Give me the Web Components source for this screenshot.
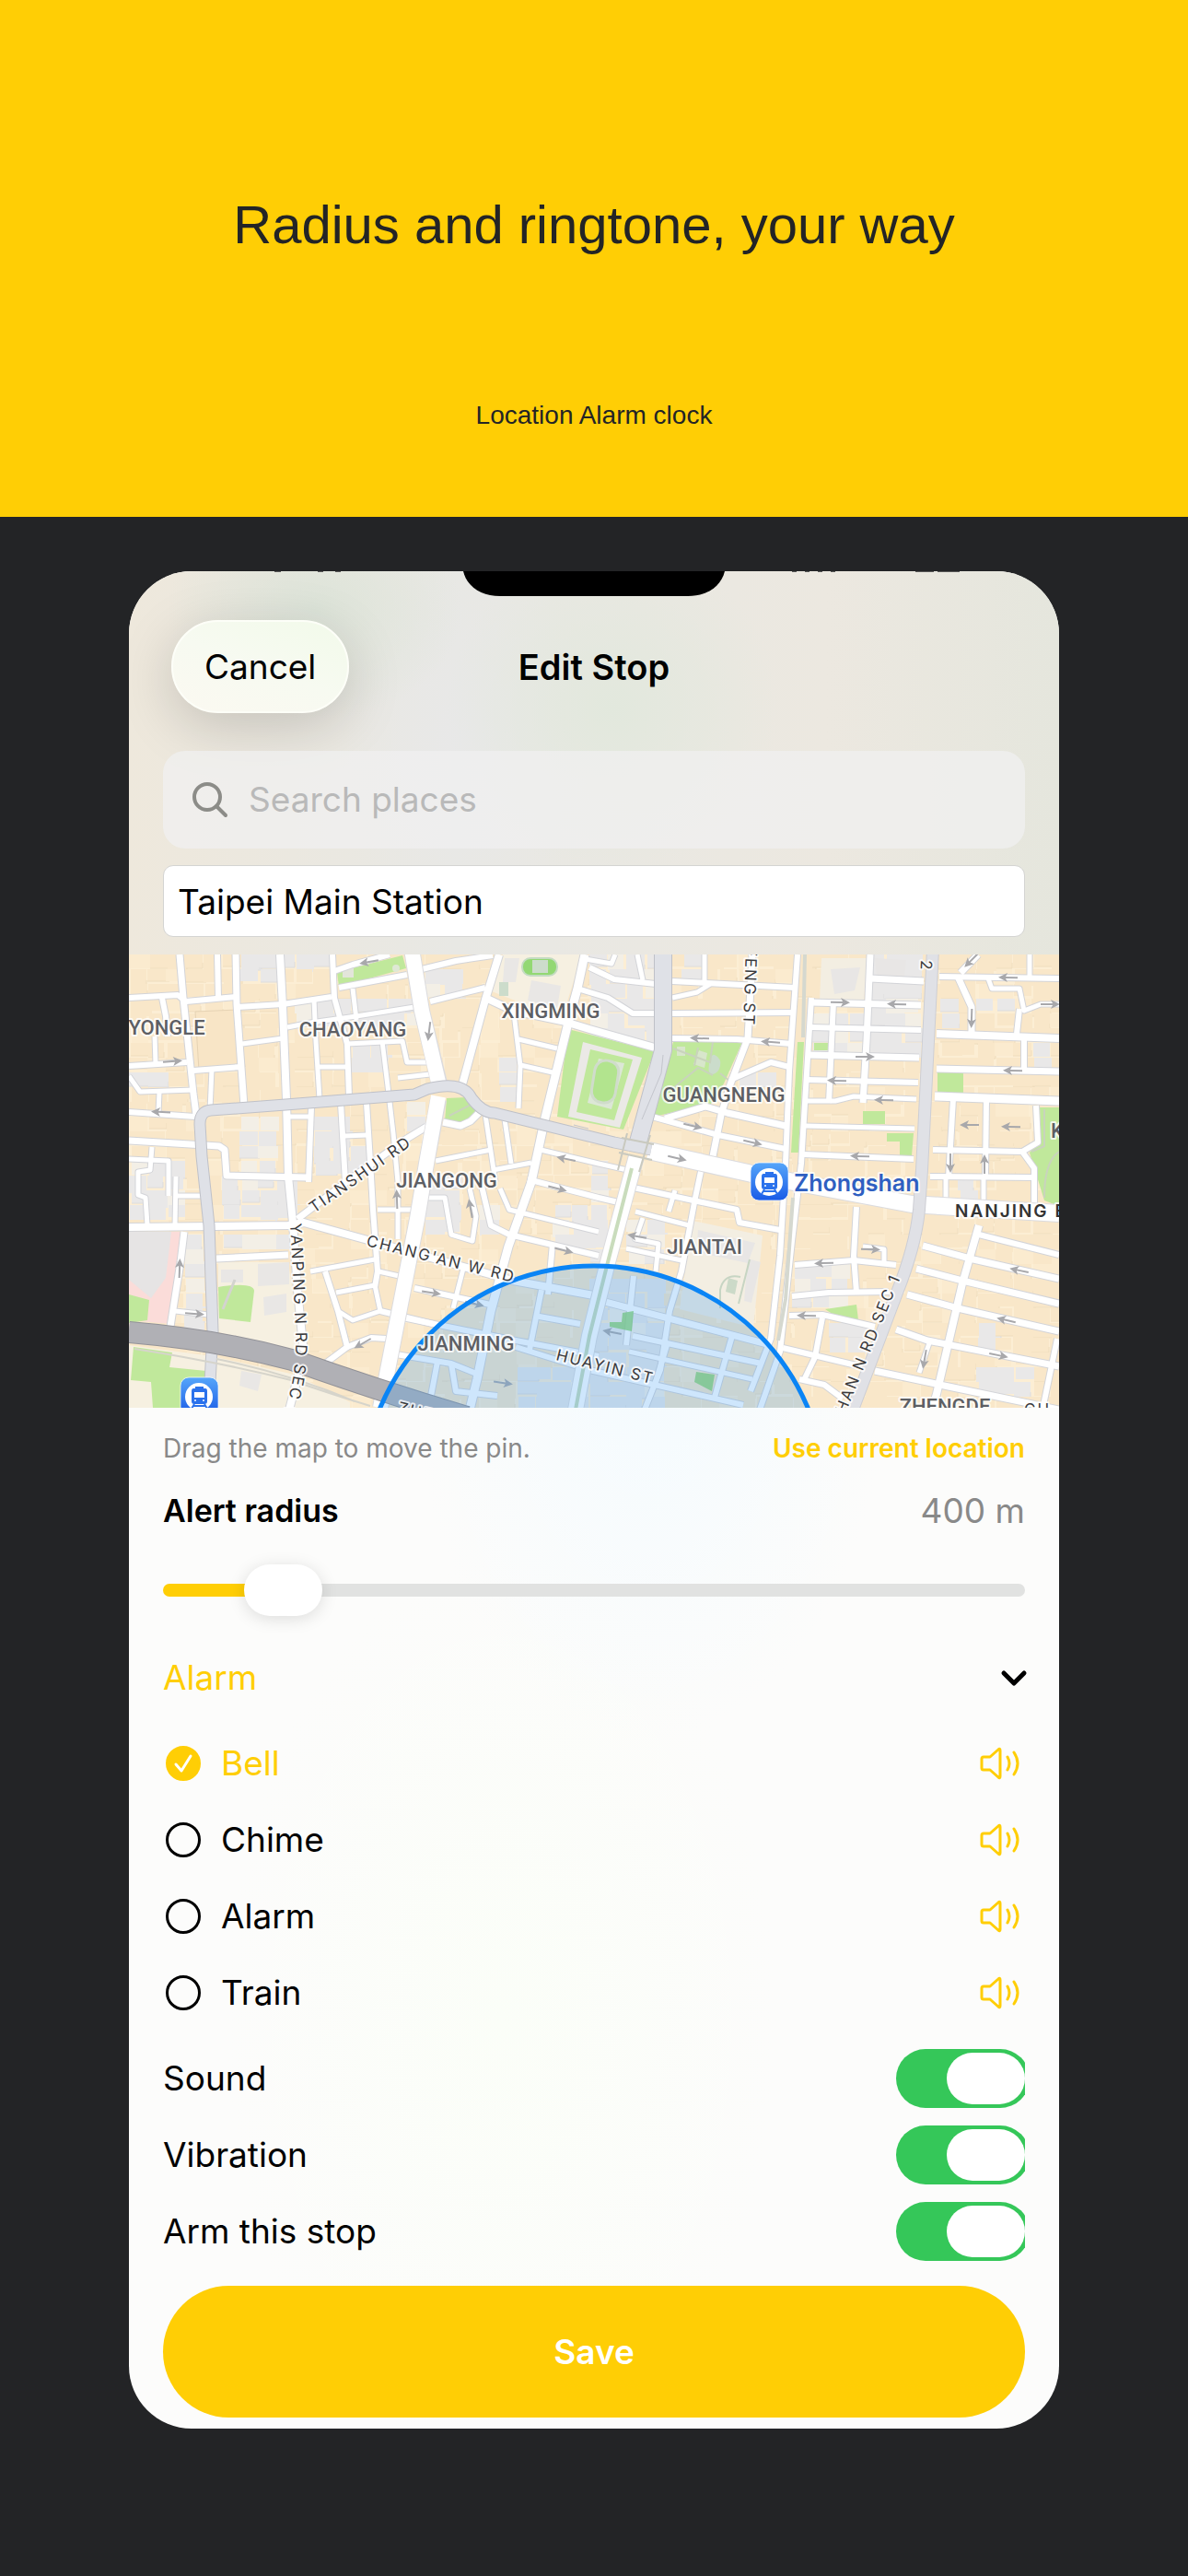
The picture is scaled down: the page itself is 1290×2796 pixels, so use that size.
<!DOCTYPE html>
<html lang="en">
<head>
<meta charset="utf-8">
<meta name="viewport" content="width=device-width, initial-scale=1">
<title>Location Alarm clock</title>
<style>
    :root {
        --yellow: #ffce05;
        --ink: #232426;
        --muted: #898989;
        --green: #35c759;
        --gutter: 37px;
    }
    body {
        margin: 0;
        background: var(--ink);
        font-family: Inter, "Noto Sans", sans-serif;
        font-size: 37px;
        line-height: 48px;
        color: #000;
    }
</style>
</head>
<body>
<promo-hero>
    <span slot="title">Radius and ringtone, your way</span>
    <span slot="subtitle">Location Alarm clock</span>
</promo-hero>
<phone-frame>
    <nav-header slot="header">
        <span slot="action">Cancel</span>
        <span slot="title">Edit Stop</span>
    </nav-header>
    <search-field slot="header" placeholder="Search places"></search-field>
    <name-field slot="header" value="Taipei Main Station"></name-field>
    <stop-map></stop-map>
    <map-hint>
        <span>Drag the map to move the pin.</span>
        <span slot="link">Use current location</span>
    </map-hint>
    <radius-slider value="400" min="100" max="3000"></radius-slider>
    <sound-picker heading="Alarm" sounds="Bell,Chime,Alarm,Train" selected="Bell"></sound-picker>
    <div>
        <toggle-row on>Sound</toggle-row>
        <toggle-row on>Vibration</toggle-row>
        <toggle-row on>Arm this stop</toggle-row>
    </div>
    <save-button>Save</save-button>
</phone-frame>

<script>
class PromoHero extends HTMLElement {
    connectedCallback() {
        this.attachShadow({ mode: 'open' });
        this.shadowRoot.innerHTML = `
            <style>
                :host {
                    display: flex;
                    flex-direction: column;
                    align-items: center;
                    gap: 155px;
                    padding: 208px 40px 94px;
                    background: var(--yellow);
                    color: var(--ink);
                    font-family: "Liberation Sans", Arial, sans-serif;
                    text-align: center;
                }
                h1 {
                    margin: 0;
                    font-size: 58px;
                    font-weight: 400;
                    line-height: 72px;
                }
                p {
                    margin: 0;
                    font-size: 28px;
                    line-height: 32px;
                }
            </style>
            <h1><slot name="title"></slot></h1>
            <p><slot name="subtitle"></slot></p>
        `;
    }
}

class PhoneFrame extends HTMLElement {
    connectedCallback() {
        this.attachShadow({ mode: 'open' });
        this.shadowRoot.innerHTML = `
            <style>
                :host {
                    display: block;
                    padding: 59px 140px 160px;
                }
                .screen {
                    border-radius: 68px;
                    overflow: hidden;
                    background:
                        radial-gradient(260px 420px at 56% 42%, #f4fbff, transparent),
                        radial-gradient(300px 500px at 40% 78%, #fbfef8, transparent),
                        #fcfcfb;
                }
                header {
                    display: flex;
                    flex-direction: column;
                    padding-bottom: 19px;
                    background:
                        radial-gradient(160px 120px at 20% 10%, #dde4d9, transparent),
                        radial-gradient(180px 180px at 52% 36%, #e2e8dd, transparent),
                        radial-gradient(140px 200px at 36% 44%, #e8e8e8, transparent),
                        linear-gradient(90deg, #eee8dc, #e8e8e4 35%, #ece8e0 75%, #e5e6dd);
                }
                .status {
                    display: block;
                    width: 100%;
                    height: 53px;
                }
            </style>
            <div class="screen">
                <header>
                    <svg class="status" viewBox="0 0 1010 53" preserveAspectRatio="xMidYMin meet" aria-hidden="true">
                        <path d="M363 0h284c-4 17-20 27-40 27H403c-20 0-36-10-40-27z"/>
                        <path d="M158 0h7v1h-7zM205 0h6v1h-6zM224 0h6v1h-6zM720 0h5v1h-5zM734 0h5v1h-5zM748 0h5v1h-5zM762 0h5v1h-5zM854 0h20v1h-20zM878 0h24v1h-24z" fill="#555"/>
                    </svg>
                    <slot name="header"></slot>
                </header>
                <slot></slot>
            </div>
        `;
    }
}

class NavHeader extends HTMLElement {
    connectedCallback() {
        this.attachShadow({ mode: 'open' });
        this.shadowRoot.innerHTML = `
            <style>
                :host {
                    display: grid;
                    grid-template-columns: 1fr auto 1fr;
                    align-items: center;
                    padding: 0 46px;
                }
                button {
                    justify-self: start;
                    height: 101px;
                    padding: 0 34px;
                    border: 2px solid #fdfef8;
                    border-radius: 51px;
                    background: linear-gradient(20deg, #fbf9f1, #f7faf1 50%, #f2faea);
                    box-shadow: 0 14px 60px rgba(0, 0, 0, .17);
                    font: inherit;
                    color: inherit;
                }
                h2 {
                    margin: 0;
                    font-size: 38px;
                    font-weight: 600;
                    line-height: 48px;
                }
            </style>
            <button type="button"><slot name="action"></slot></button>
            <h2><slot name="title"></slot></h2>
        `;
    }
}

class SearchField extends HTMLElement {
    connectedCallback() {
        const placeholder = this.getAttribute('placeholder');
        this.attachShadow({ mode: 'open' });
        this.shadowRoot.innerHTML = `
            <style>
                :host {
                    display: block;
                    margin: 41px var(--gutter) 18px;
                }
                label {
                    display: flex;
                    align-items: center;
                    gap: 22px;
                    height: 106px;
                    padding: 0 31px;
                    border-radius: 24px;
                    background: rgba(240, 240, 240, .75);
                }
                svg {
                    flex: none;
                    width: 40px;
                    height: 40px;
                }
                input {
                    flex: 1;
                    min-width: 0;
                    padding: 0;
                    border: 0;
                    outline: 0;
                    background: none;
                    font: inherit;
                    color: inherit;
                }
                input::placeholder {
                    color: #b9b9b9;
                    opacity: 1;
                }
            </style>
            <label>
                <svg viewBox="0 0 40 40" fill="none" stroke="#8c8c88" stroke-width="4" stroke-linecap="round" aria-hidden="true">
                    <circle cx="17" cy="17" r="14"/>
                    <path d="M27 27l10 10"/>
                </svg>
                <input type="search" aria-label="${placeholder}" placeholder="${placeholder}">
            </label>
        `;
    }
}

class NameField extends HTMLElement {
    connectedCallback() {
        this.attachShadow({ mode: 'open' });
        this.shadowRoot.innerHTML = `
            <style>
                :host {
                    display: block;
                    margin: 0 var(--gutter);
                }
                input {
                    display: block;
                    box-sizing: border-box;
                    width: 100%;
                    height: 78px;
                    padding: 0 15px;
                    border: 1px solid #d4d4d2;
                    border-radius: 11px;
                    background: #fff;
                    font: inherit;
                    color: inherit;
                }
            </style>
            <input type="text" aria-label="Stop name" value="${this.getAttribute('value')}">
        `;
    }
}

// [width, points] pairs for the plain white streets
const STREETS = [
    [6, '195,1036 199,1083 210,1187 213,1210'], [5, '236,1036 237,1082'], [6, '256,1036 257,1090 265,1200'],
    [7, '304,1036 307,1093 311,1193 313,1277 318,1327 323,1400 330,1470 314,1530'],
    [5, '361,1036 363,1083 377,1133 379,1190'], [4, '341,1085 343,1130 347,1193'],
    [4, '415,1130 422,1187 427,1230 432,1283'], [4, '383,1073 387,1107'], [5, '370,1197 375,1283'],
    [5, '398,1197 403,1277 405,1313 410,1380 407,1397'], [5, '338,1202 335,1283'],
    [5, '176,1083 180,1103 182,1125'], [4, '168,1125 169,1155'], [4, '230,1160 228,1205'],
    [5, '140,1083 193,1080 202,1087 256,1082'], [5, '258,1093 307,1090 360,1082'],
    [5, '360,1055 383,1047 423,1036'], [5, '368,1072 442,1058'], [5, '458,1052 495,1043 535,1037'],
    [5, '467,1087 527,1072'], [4, '312,1115 337,1110 387,1103 450,1093'], [4, '263,1133 307,1127'],
    [5, '140,1157 203,1153'], [5, '210,1162 262,1158'], [4, '140,1168 152,1185 210,1183'],
    [5, '140,1207 212,1212'], [4, '347,1158 377,1158'], [4, '377,1133 437,1130 442,1153 463,1153'],
    [4, '432,1170 467,1166'], [4, '173,1185 172,1208'],
    [6, '140,1238 190,1241 238,1244 244,1248 246,1276 333,1278'],
    [4, '140,1258 183,1260 183,1298'], [4, '165,1245 163,1270 150,1272 150,1297 158,1300 160,1330'],
    [4, '313,1212 338,1212'], [4, '374,1233 398,1232'], [4, '191,1277 190,1330'], [4, '190,1298 220,1298'],
    [7, '502,1177 527,1085 542,1036'], [7, '527,1083 557,1097 610,1108 640,1117 711,1137'],
    [8, '635,1036 627,1073 617,1110 592,1213 577,1283 552,1353 533,1423 518,1497 510,1530'],
    [4, '558,1100 565,1157 563,1203'], [4, '563,1128 605,1138'], [4, '565,1156 600,1164'],
    [6, '463,1223 440,1237 380,1280 323,1323'], [4, '527,1210 538,1283'], [4, '548,1215 555,1263'],
    [4, '473,1260 533,1248'], [4, '535,1270 577,1262'], [4, '587,1248 650,1263 690,1272'],
    [6, '481,1218 500,1222 511,1217 520,1208'],
    [5, '640,1050 667,1063 712,1068'], [5, '627,1073 660,1083 687,1100 712,1100'],
    [4, '630,1040 664,1046 668,1036'], [4, '692,1036 698,1064'],
    [5, '730,1065 863,1072'], [4, '730,1083 757,1077 773,1067'], [5, '730,1100 863,1099'],
    [5, '730,1127 800,1128 860,1133'], [6, '817,1036 812,1127 793,1177 783,1210 773,1260'],
    [5, '866,1036 857,1163 853,1263 847,1363 837,1453 815,1510'],
    [5, '881,1083 870,1263 860,1347 847,1467 825,1530'],
    [6, '945,1036 941,1130 937,1197'], [5, '905,1087 900,1197'],
    [6, '880,1088 1000,1091'], [5, '880,1115 1000,1118'], [6, '877,1145 998,1148'], [5, '877,1172 997,1175'],
    [4, '877,1195 907,1195 927,1190 995,1193'], [4, '875,1222 993,1225'], [5, '873,1253 992,1258'],
    [6, '945,1062 1003,1065'], [4, '765,1036 765,1065'],
    [5, '1020,1060 1150,1062'], [6, '1040,1060 1055,1093 1055,1120'], [6, '1062,1036 1043,1056'],
    [7, '1017,1122 1150,1127'], [6, '1017,1160 1150,1163'], [8, '1015,1190 1150,1195'],
    [5, '1035,1193 1030,1278'], [5, '1071,1193 1070,1276'], [5, '1013,1248 1110,1250 1127,1240 1125,1200'],
    [5, '1110,1250 1123,1268 1123,1310'], [5, '1010,1277 1123,1278'], [5, '1112,1127 1112,1160'],
    [4, '1073,1062 1077,1073 1107,1073 1112,1097 1130,1090 1150,1090'], [5, '1107,1095 1104,1122'],
    [4, '1118,1036 1118,1062'], [4, '1027,1280 1027,1305'], [4, '1068,1278 1068,1308'],
    [5, '708,1212 780,1232 853,1247'], [6, '722,1214 766,1201 790,1208 853,1222'], [5, '793,1172 837,1153 857,1158'],
    [5, '763,1262 755,1300 740,1380 727,1423 717,1487 700,1530'],
    [5, '930,1310 927,1363 930,1403'], [5, '863,1373 927,1368 973,1373'], [4, '937,1353 960,1356 960,1370'],
    [5, '860,1407 900,1403 965,1402'], [5, '857,1428 893,1427 950,1440'], [5, '850,1463 930,1482'],
    [5, '893,1430 885,1473 872,1500'], [5, '868,1497 895,1503 915,1518'],
    [5, '1063,1340 1150,1362'], [6, '1002,1352 1057,1367 1150,1388'], [6, '995,1377 1045,1390 1150,1415'],
    [6, '985,1405 1040,1420 1150,1445'], [6, '973,1443 1007,1455 1150,1483'], [6, '950,1488 1030,1505 1150,1530'],
    [7, '1063,1330 1045,1393 1017,1513 1012,1530'], [5, '1148,1453 1132,1530'], [4, '1010,1455 998,1490'],
    [5, '683,1288 800,1313 803,1327 847,1335'], [4, '690,1315 748,1330'], [4, '680,1355 740,1368'],
    [4, '733,1292 726,1315'], [4, '698,1322 690,1345 715,1350 712,1380'],
    [6, '657,1413 837,1460'], [5, '687,1450 827,1480'], [4, '683,1467 817,1497'], [5, '560,1462 640,1487 807,1525'],
    [5, '688,1385 680,1460'], [5, '795,1450 775,1520'], [5, '725,1457 712,1500'],
    [7, '140,1332 313,1330 330,1327 403,1347 557,1390 650,1407'], [6, '200,1337 196,1370 185,1440'],
    [6, '235,1366 313,1362'], [4, '337,1380 407,1367'], [5, '353,1380 367,1423 377,1462 353,1480'],
    [4, '365,1403 407,1395 413,1423 383,1433 367,1423'], [4, '411,1380 438,1386'], [5, '413,1423 470,1437'],
    [5, '377,1462 403,1452 420,1453'], [5, '437,1430 560,1455 650,1472'], [5, '450,1398 537,1417'],
    [4, '503,1377 492,1420'], [4, '465,1300 483,1300 490,1340 513,1347 517,1320 510,1290'],
    [5, '522,1283 533,1330 553,1340 650,1363'], [4, '543,1290 553,1313 650,1337'], [5, '573,1280 650,1300 680,1307'],
    [4, '410,1313 450,1313'], [4, '190,1423 227,1427'], [4, '432,1285 432,1345'], [5, '430,1470 490,1480 520,1492'],
    [5, '475,1478 468,1515'], [5, '490,1480 495,1510 540,1515'], [5, '588,1400 575,1465'], [5, '580,1428 630,1437'],
    [5, '600,1350 595,1405']
];

// [x, y, angle] of the one-way arrows
const ARROWS = [
    [401, 1044, 170], [187, 1152, -4], [466, 1119, 97], [175, 1207, 183], [615, 1258, 192], [752, 1222, 13],
    [817, 1240, 13], [735, 1257, 13], [760, 1127, 182], [837, 1131, 184], [912, 1088, 1], [974, 1090, 182],
    [1055, 1105, 92], [1095, 1061, 181], [1055, 1042, 135], [939, 1147, 0], [909, 1173, 182], [960, 1194, 181],
    [1100, 1162, 181], [934, 1255, 182], [1053, 1221, 180], [1098, 1223, 181], [1032, 1262, 90], [1069, 1264, -90],
    [195, 1377, -88], [211, 1426, 4], [394, 1458, 150], [468, 1403, 9], [515, 1415, 13], [511, 1312, 260],
    [431, 1302, 268], [605, 1290, 15], [612, 1357, 14], [546, 1501, 8], [692, 1342, 190], [945, 1356, 2],
    [895, 1371, 178], [876, 1428, 181], [1107, 1379, 192], [1093, 1433, 193], [1084, 1471, 12], [1004, 1475, 100],
    [665, 1446, 191], [1140, 1090, 0]
];

// [x1, y1, x2, y2] of the blocks where grey buildings prevail
const GREY_ZONES = [
    [258, 1036, 300, 1062], [305, 1036, 358, 1052], [310, 1090, 450, 1120], [378, 1130, 415, 1165],
    [455, 1046, 500, 1080], [630, 1036, 712, 1130], [535, 1150, 562, 1195], [430, 1195, 462, 1232],
    [265, 1215, 305, 1275], [140, 1258, 190, 1330], [240, 1280, 312, 1330], [235, 1340, 312, 1362],
    [342, 1210, 370, 1275], [190, 1340, 225, 1450], [376, 1240, 398, 1275], [467, 1270, 490, 1335],
    [522, 1310, 545, 1345], [590, 1300, 640, 1350], [640, 1262, 665, 1370], [670, 1320, 715, 1370],
    [948, 1040, 1000, 1150], [885, 1095, 940, 1142], [1018, 1085, 1045, 1120], [1113, 1130, 1130, 1160],
    [863, 1378, 910, 1425], [893, 1435, 930, 1470], [1050, 1488, 1125, 1520], [1060, 1440, 1085, 1460],
    [1035, 1280, 1065, 1305], [140, 1160, 180, 1185], [730, 1040, 765, 1062], [800, 1155, 830, 1172],
    [1060, 1075, 1105, 1095], [640, 1380, 720, 1525], [560, 1480, 640, 1525]
];

class StopMap extends HTMLElement {
    connectedCallback() {
        this.attachShadow({ mode: 'open' });
        const lines = (color, extra) => STREETS.map(([w, points]) =>
            `<polyline points="${points}" stroke="${color}" stroke-width="${w + extra}"/>`).join('');
        const arrows = ARROWS.map(([x, y, angle]) =>
            `<use href="#arrow" transform="translate(${x} ${y}) rotate(${angle})"/>`).join('');

        this.shadowRoot.innerHTML = `
            <style>
                :host {
                    display: block;
                }
                svg {
                    display: block;
                    width: 100%;
                }
                .roads {
                    fill: none;
                    stroke-linejoin: round;
                }
                text {
                    paint-order: stroke;
                    stroke: #fff;
                    stroke-width: 4px;
                    stroke-linejoin: round;
                    stroke-opacity: .8;
                }
                .area {
                    font: 500 22px Roboto, sans-serif;
                    fill: #5d5f64;
                    text-anchor: middle;
                }
                .road {
                    font: 400 17px Inter, sans-serif;
                    fill: #3a3a3c;
                    letter-spacing: 2px;
                }
                .major {
                    font: 600 19px Inter, sans-serif;
                    fill: #333;
                    letter-spacing: 2px;
                }
                .station {
                    font: 600 25px Inter, sans-serif;
                    fill: #2f5fc1;
                }
            </style>
            <svg viewBox="140 1036 1010 492" role="img" aria-label="Map around Taipei Main Station">
                <defs>
                    <linearGradient id="blue" x2="0" y2="1">
                        <stop stop-color="#56a6fa"/>
                        <stop offset="1" stop-color="#1a5be6"/>
                    </linearGradient>
                    <path id="arrow" d="M-10-1H3l-2-4 10 5-10 5 2-4h-13z" fill="#a8a8ab"/>
                    <path id="yanping" d="M315 1328Q319 1395 321 1450Q323 1500 303 1545"/>
                    <g id="train">
                        <rect width="41" height="41" rx="9" fill="url(#blue)" stroke="#fff" stroke-opacity=".7"/>
                        <circle cx="20" cy="21" r="15" fill="#fff"/>
                        <path d="M16 10h9v2h2q2 0 2 3v11q0 3-3 3H15q-3 0-3-3V15q0-3 2-3h2z" fill="#2b72ec"/>
                        <path d="M15 16h11v6H15z" fill="#fff"/>
                        <circle cx="16" cy="25" r="1" fill="#fff"/>
                        <circle cx="25" cy="25" r="1" fill="#fff"/>
                        <path d="M15 29l-3 5M26 29l3 5M14 31h13" stroke="#2b72ec" stroke-width="2"/>
                    </g>
                </defs>
                <rect x="140" y="1036" width="1010" height="492" fill="#fceed4"/>
                <g id="buildings"></g>
                <path d="M212 1098l46-2 8 62-50 4z" fill="#f8e5c6" stroke="#e6d3b4"/>
                <path d="M140 1460l90 12 90 20 60 30v10H140zM237 1370h76l14 98-90-22zM546 1036h86l-22 70-76-30z" fill="#f6f0e1"/>
                <path d="M140 1337h58l-12 100-46-4z" fill="#fbdcd9"/>
                <path d="M140 1337h46l-6 50-16 22-24-20z" fill="#e6e4e4"/>
                <path d="M892 1040h50l-4 46h-48zM752 1325l76 16-10 100-80-20z" fill="#f3eee2"/>
                <path d="M902 1052l32-2-6 25-22 4zM950 1040l34 2-2 20-30-3zM758 1335l62 14-8 22-56-12zM812 1366l14 4-10 44-8-2z" fill="#e8e6e5"/>
                <path d="M254 1452l34 6v18l-34-8zM240 1378h24v14h-24zM280 1372l34-2v24l-34 2zM286 1408l25-4v20l-24 4zM262 1488l22 4-4 18-20-6zM577 1064l32 6-4 24-32-8zM548 1040h16l-4 26h-14z" fill="#e9e7e5"/>

                <g fill="#c0e89b">
                    <path d="M366 1055l71-18 4 14-73 20z"/>
                    <path d="M617 1117l94 24-34 85-72-14z"/>
                    <path d="M731 1131h75l-20 45-14 22-62 14z"/>
                    <path d="M485 1192l22-1 14 15-18 11h-20z"/>
                    <path d="M866 1131h7l-6 120h-8z"/>
                    <path d="M884 1132h15v8h-15zM1018 1164h28v25h-28zM937 1206h24v14h-24zM963 1230h29l-2 24h-13v-15h-14z"/>
                    <path d="M1129 1202h21v107l-16-6-16-52 12-14z"/>
                    <path d="M237 1397q38-6 39 4l-4 34-34-4z"/>
                    <path d="M140 1405l22 6-2 22-20 3zM145 1462l42 6-3 16 40 4v40h-58l-2-28-22-2z"/>
                    <path d="M896 1421l34-5 2 17-24-4z"/>
                </g>
                <path d="M735 1136h9v10h-9zM759 1140l9 3-3 16-12-4z" fill="#d8e6cb"/>
                <!-- school grounds inside the parks -->
                <path d="M633 1131l64 17-24 76-56-12z" fill="#ebe9e6"/>
                <path d="M641 1139l46 11-20 66-41-9z" fill="#c0e89b"/>
                <path d="M650 1149l28 5-14 50-26-7z" fill="#dce7d6"/>
                <rect x="644" y="1151" width="26" height="46" rx="12" fill="#b2e48e" stroke="#d0dccb" stroke-width="3" transform="rotate(9 657 1174)"/>
                <rect x="567" y="1040" width="38" height="19" rx="9" fill="#93d873" stroke="#c4dbc2" stroke-width="2"/>
                <path d="M578 1042h17v14h-17zM542 1066h10v15h-10z" fill="#ccdccb"/>
                <path d="M372 1049h12v12h-12z" fill="#e3e5da"/>
                <circle cx="430" cy="1051" r="4" fill="#dfe8d4"/>
                <path d="M776 1145q8 4 6 12t-8 9-4-11 6-10z" fill="#cbdccb"/>
                <g fill="none" stroke="#c9d3bd" stroke-width="2">
                    <path d="M731 1138l40 15 3-22M774 1167l-16-8-27 22M782 1165l10 8M758 1137l-4 20M488 1211l23-12M1134 1300q0-40 16-50M1120 1250l14-6v-40"/>
                    <path d="M782 1420v-20q4-18 22-14M802 1415l12-48" stroke="#c7d5c3"/>
                </g>
                <path d="M791 1387l10 3-3 15-10-3z" fill="#ccdac8"/>
                <path d="M242 1421l13-32" stroke="#d3d3cf" stroke-width="3"/>

                <g class="roads">${lines('#d3d4d8', 3)}</g>
                <g class="roads">${lines('#fff', 1)}</g>
                <g class="roads">
                    <path d="M447 1030l11 67 20 83M476 1193l-13 70-10 60-40 205" stroke="#dbdbde" stroke-width="18"/>
                    <path d="M447 1030l11 67 20 86M476 1190l-13 73-10 60-40 205" stroke="#fff" stroke-width="16"/>
                    <path d="M704 1249l126 28 160 30 160 10" stroke="#dbdbde" stroke-width="20"/>
                    <path d="M704 1249l126 28 160 30 160 10" stroke="#fff" stroke-width="18"/>
                    <path d="M691 1255l-31 115-20 80-15 80" stroke="#dbdbde" stroke-width="18"/>
                    <path d="M691 1255l-31 115-20 80-15 80" stroke="#fff" stroke-width="16"/>
                    <path d="M686 1268l-26 102-20 80-15 80" stroke="#c9dcbc" stroke-width="4"/>
                    <path d="M874 1036l-2 90M861 1300l-8 110-8 45" stroke="#d5d8cf" stroke-width="4"/>
                    <path d="M227 1520l4-75-4-115-8-75-2-35q0-14 12-15l81-6 140-11 14-6q38-10 48 10 12 16 25 16l130 32 40 8" stroke="#bfc1c8" stroke-width="13"/>
                    <path d="M720 1030v110l-28 103" stroke="#bfc1c8" stroke-width="20"/>
                    <path d="M1013 1030l-5 100-7 140-3 43q-4 40-24 90l-48 127" stroke="#cdced4" stroke-width="14"/>
                    <path d="M227 1520l4-75-4-115-8-75-2-35q0-14 12-15l81-6 140-11 14-6q38-10 48 10 12 16 25 16l130 32 40 8" stroke="#dfe1e7" stroke-width="11"/>
                    <path d="M720 1030v110l-28 103" stroke="#dfe1e7" stroke-width="18"/>
                    <path d="M1013 1030l-5 100-7 140-3 43q-4 40-24 90l-48 127" stroke="#e0e1e6" stroke-width="12"/>
                    <path d="M720 1145l-2 20-21 50M623 1221l16 4" stroke="#c3c5cc"/>
                    <path d="M675 1235l35 7M672 1251l36 8M681 1230l-10 40M706 1232l-12 40" stroke="#c9c9bf" stroke-width="2"/>
                    <path d="M140 1446q95 8 177 30 90 32 190 62" stroke="#929298" stroke-width="24"/>
                    <path d="M140 1446q95 8 177 30 90 32 190 62" stroke="#b0b0b5" stroke-width="22"/>
                    <path d="M146 1464q90 14 170 34 40 14 86 28M235 1475q80 16 150 46" stroke="#d6d4cb" stroke-width="2"/>
                </g>
                ${arrows}

                <circle cx="645" cy="1626" r="252" fill="#3b9df5" fill-opacity=".25" stroke="#0a84f5" stroke-width="5"/>
                <path d="M676 1425l12-2-2 22-24-5v-5h13zM756 1489l20 3-3 18-19-10z" fill="#77c48c" fill-opacity=".8"/>

                <text class="area" x="181" y="1123">YONGLE</text>
                <text class="area" x="383" y="1125">CHAOYANG</text>
                <text class="area" x="598" y="1105">XINGMING</text>
                <text class="area" x="786" y="1196">GUANGNENG</text>
                <text class="area" x="485" y="1289">JIANGONG</text>
                <text class="area" x="765" y="1361">JIANTAI</text>
                <text class="area" x="506" y="1466">JIANMING</text>
                <text class="area" x="1026" y="1534">ZHENGDE</text>
                <text class="area" x="1148" y="1235">K</text>
                <text class="road" transform="translate(341 1317) rotate(-35)">TIANSHUI RD</text>
                <text class="road" transform="translate(397 1352) rotate(14)">CHANG'AN W RD</text>
                <text class="road" transform="translate(603 1476) rotate(14)">HUAYIN ST</text>
                <text class="road" transform="translate(431 1533) rotate(14)">ZHENG</text>
                <text class="road" x="1112" y="1536">CH</text>
                <text class="road" transform="translate(807 1114) rotate(92)" text-anchor="end">FENG ST</text>
                <text class="road" transform="translate(1000 1042) rotate(92)">2</text>
                <text class="road" transform="translate(978 1386) rotate(-68)" text-anchor="end">SHAN N RD SEC 1</text>
                <text class="road"><textPath href="#yanping">YANPING N RD SEC 1</textPath></text>
                <text class="major" x="1037" y="1321">NANJING E</text>
                <use href="#train" x="815" y="1262"/>
                <use href="#train" x="196" y="1495"/>
                <text class="station" x="862" y="1293">Zhongshan</text>
            </svg>
        `;
        this.drawBuildings();
    }

    // Scatter footprints over the blocks; a fixed seed keeps the map the same on every load
    drawBuildings() {
        let seed = 7;
        const random = () => {
            seed = (seed * 16807) % 2147483647;
            return seed / 2147483647;
        };
        let shapes = '';
        for (let y = 1036; y < 1530; y += 16) {
            for (let x = 140; x < 1150; x += 20) {
                const grey = GREY_ZONES.some(([x1, y1, x2, y2]) => x + 8 >= x1 && x + 8 < x2 && y + 6 >= y1 && y + 6 < y2);
                const pick = random();
                const w = 17 + Math.floor(random() * 8);
                const h = 13 + Math.floor(random() * 7);
                const left = x + Math.floor(random() * 4);
                let color = pick < 0.1 ? '#fbebcf' : '#f9e7c9';
                if (grey) color = pick < 0.15 ? '#f3efe6' : '#e9e8e8';
                shapes += `<rect x="${left}" y="${y}" width="${w}" height="${h}" fill="${color}"/>`;
                if (pick > 0.6) {
                    shapes += `<path d="M${left} ${y + h}h${w}v-6" fill="none" stroke="${grey ? '#dcdcdd' : '#eedcbc'}"/>`;
                }
            }
        }
        this.shadowRoot.getElementById('buildings').innerHTML = shapes;
    }
}

class MapHint extends HTMLElement {
    connectedCallback() {
        this.attachShadow({ mode: 'open' });
        this.shadowRoot.innerHTML = `
            <style>
                :host {
                    display: flex;
                    justify-content: space-between;
                    margin: 26px var(--gutter);
                    font-size: 28px;
                    line-height: 36px;
                    color: var(--muted);
                }
                a {
                    color: var(--yellow);
                    font-weight: 600;
                    text-decoration: none;
                }
            </style>
            <slot></slot>
            <a href="#current"><slot name="link"></slot></a>
        `;
    }
}

class RadiusSlider extends HTMLElement {
    connectedCallback() {
        const { value, min, max } = Object.fromEntries([...this.attributes].map(a => [a.name, a.value]));
        this.attachShadow({ mode: 'open' });
        this.shadowRoot.innerHTML = `
            <style>
                :host {
                    display: block;
                    margin: 0 var(--gutter) 43px;
                }
                .row {
                    display: flex;
                    justify-content: space-between;
                    margin-bottom: 34px;
                }
                label {
                    font-size: 34px;
                    font-weight: 600;
                }
                output {
                    color: var(--muted);
                }
                input {
                    -webkit-appearance: none;
                    appearance: none;
                    display: block;
                    width: 100%;
                    height: 56px;
                    margin: 0;
                    background: none;
                }
                input::-webkit-slider-runnable-track {
                    height: 14px;
                    border-radius: 7px;
                    background: linear-gradient(90deg, var(--yellow) var(--fill), #e1e2e1 var(--fill));
                }
                input::-webkit-slider-thumb {
                    -webkit-appearance: none;
                    width: 85px;
                    height: 56px;
                    margin-top: -21px;
                    border-radius: 28px;
                    background: #fff;
                    box-shadow: 0 3px 18px rgba(0, 0, 0, .13);
                }
            </style>
            <div class="row">
                <label for="radius">Alert radius</label>
                <output for="radius"></output>
            </div>
            <input id="radius" type="range" min="${min}" max="${max}" step="100" value="${value}">
        `;

        const input = this.shadowRoot.querySelector('input');
        const output = this.shadowRoot.querySelector('output');
        const update = () => {
            const part = (input.value - min) / (max - min);
            input.style.setProperty('--fill', `${Math.round(5 + part * 90)}%`);
            output.textContent = `${input.value} m`;
        };
        input.addEventListener('input', update);
        update();
    }
}

class SoundPicker extends HTMLElement {
    connectedCallback() {
        const selected = this.getAttribute('selected');
        const rows = this.getAttribute('sounds').split(',').map(name => `
            <div class="row">
                <label>
                    <input type="radio" name="sound" value="${name}" ${name === selected ? 'checked' : ''}>
                    <svg class="tick" viewBox="0 0 38 38" aria-hidden="true"><path d="M11 20l6 7 10-16"/></svg>
                    <span>${name}</span>
                </label>
                <button type="button" aria-label="Play ${name}">
                    <svg class="speaker" viewBox="0 0 44 36" aria-hidden="true">
                        <path d="M2 13q0-2 2-2h7L20 3q2-2 2 1v28q0 3-2 1l-9-8H4q-2 0-2-2zM30 11q4 7 0 14M37 6q8 12 0 24"/>
                    </svg>
                </button>
            </div>
        `).join('');
        this.attachShadow({ mode: 'open' });
        this.shadowRoot.innerHTML = `
            <style>
                :host {
                    display: block;
                    margin: 0 var(--gutter) 10px;
                }
                button {
                    display: flex;
                    padding: 0;
                    border: 0;
                    background: none;
                    font: inherit;
                    color: var(--yellow);
                }
                svg {
                    fill: none;
                    stroke-linecap: round;
                    stroke-linejoin: round;
                }
                .heading {
                    justify-content: space-between;
                    align-items: center;
                    width: 100%;
                    margin-bottom: 27px;
                }
                .chevron {
                    width: 32px;
                    height: 24px;
                    margin-right: -4px;
                    stroke: #000;
                    stroke-width: 5;
                }
                .row {
                    display: flex;
                    justify-content: space-between;
                    align-items: center;
                    height: 83px;
                    padding: 0 5px 0 3px;
                }
                label {
                    display: grid;
                    grid-template-columns: 38px auto;
                    column-gap: 22px;
                    align-items: center;
                }
                label:has(:checked) {
                    color: var(--yellow);
                }
                input, .tick {
                    grid-area: 1 / 1;
                    width: 38px;
                    height: 38px;
                }
                input {
                    -webkit-appearance: none;
                    appearance: none;
                    box-sizing: border-box;
                    margin: 0;
                    border: 3px solid #000;
                    border-radius: 50%;
                }
                input:checked {
                    border-color: var(--yellow);
                    background: var(--yellow);
                }
                .tick {
                    pointer-events: none;
                    stroke: #fff;
                    stroke-width: 3;
                    visibility: hidden;
                }
                input:checked + .tick {
                    visibility: visible;
                }
                .speaker {
                    width: 44px;
                    height: 36px;
                    stroke: var(--yellow);
                    stroke-width: 3;
                }
            </style>
            <button class="heading" type="button" aria-expanded="true">
                ${this.getAttribute('heading')}
                <svg class="chevron" viewBox="0 0 32 24" aria-hidden="true"><path d="M5 7l11 11L27 7"/></svg>
            </button>
            ${rows}
        `;
    }
}

class ToggleRow extends HTMLElement {
    connectedCallback() {
        this.attachShadow({ mode: 'open' });
        this.shadowRoot.innerHTML = `
            <style>
                :host {
                    display: block;
                    margin: 0 var(--gutter);
                }
                label {
                    display: flex;
                    justify-content: space-between;
                    align-items: center;
                    height: 83px;
                    overflow: hidden;
                }
                input {
                    -webkit-appearance: none;
                    appearance: none;
                    display: flex;
                    box-sizing: border-box;
                    width: 145px;
                    height: 64px;
                    margin: 0 -5px 0 0;
                    padding: 4px 5px;
                    border-radius: 32px;
                    background: #d5d5d5;
                }
                input::before {
                    content: '';
                    width: 85px;
                    height: 56px;
                    border-radius: 28px;
                    background: #fff;
                }
                input:checked {
                    justify-content: flex-end;
                    background: var(--green);
                }
            </style>
            <label>
                <slot></slot>
                <input type="checkbox" role="switch" ${this.hasAttribute('on') ? 'checked' : ''}>
            </label>
        `;
    }
}

class SaveButton extends HTMLElement {
    connectedCallback() {
        this.attachShadow({ mode: 'open' });
        this.shadowRoot.innerHTML = `
            <style>
                :host {
                    display: block;
                    padding: 18px var(--gutter) 12px;
                }
                button {
                    display: block;
                    width: 100%;
                    height: 143px;
                    border: 0;
                    border-radius: 72px;
                    background: var(--yellow);
                    color: #fff;
                    font: inherit;
                    font-weight: 600;
                }
            </style>
            <button type="button"><slot></slot></button>
        `;
    }
}

customElements.define('promo-hero', PromoHero);
customElements.define('phone-frame', PhoneFrame);
customElements.define('nav-header', NavHeader);
customElements.define('search-field', SearchField);
customElements.define('name-field', NameField);
customElements.define('stop-map', StopMap);
customElements.define('map-hint', MapHint);
customElements.define('radius-slider', RadiusSlider);
customElements.define('sound-picker', SoundPicker);
customElements.define('toggle-row', ToggleRow);
customElements.define('save-button', SaveButton);
</script>
</body>
</html>
